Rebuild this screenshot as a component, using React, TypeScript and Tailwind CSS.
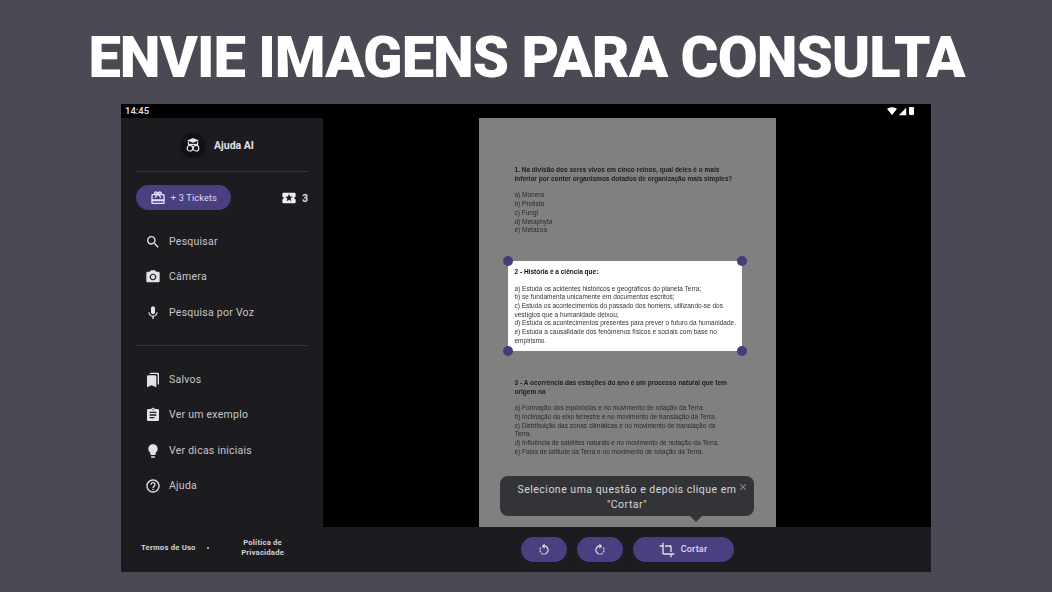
import React from "react";
import {
  MdAssignment,
  MdBookmarks,
  MdClose,
  MdCrop,
  MdHelpOutline,
  MdLightbulb,
  MdLocalActivity,
  MdMic,
  MdOutlineRedeem,
  MdPhotoCamera,
  MdRotateLeft,
  MdRotateRight,
  MdSearch,
  MdSignalCellular4Bar,
  MdSignalWifi4Bar,
} from "react-icons/md";

const topMenu = [
  { label: "Pesquisar", icon: MdSearch },
  { label: "Câmera", icon: MdPhotoCamera },
  { label: "Pesquisa por Voz", icon: MdMic },
];

const bottomMenu = [
  { label: "Salvos", icon: MdBookmarks },
  { label: "Ver um exemplo", icon: MdAssignment },
  { label: "Ver dicas iniciais", icon: MdLightbulb },
  { label: "Ajuda", icon: MdHelpOutline },
];

const MenuItem = ({ label, icon: Icon }: { label: string; icon: React.ElementType }) => (
  <div className="flex h-[35.5px] items-center pl-[24px] pt-[1px]">
    <Icon className="h-[16px] w-[16px] text-[#e6e1e5]" />
    <span className="ml-[8px] text-[10.5px] tracking-[0.25px] text-[#c9c5ca]">{label}</span>
  </div>
);

const Logo = () => (
  <div className="flex h-[22px] w-[22px] items-center justify-center rounded-full bg-[#111013] shadow-[0_1px_4px_rgba(0,0,0,0.8)]">
    <svg width="16" height="16" viewBox="0 0 16 16" fill="none" stroke="#e6e1e5" strokeWidth="1.2">
      <path d="M8 1 14 3.4 8 5.8 2 3.4Z" fill="#e6e1e5" stroke="none" />
      <path d="M3.4 4.5V7.6M12.6 4.5V7.6" />
      <path d="M3 7.4h10" />
      <circle cx="5" cy="11.2" r="2.8" />
      <circle cx="11" cy="11.2" r="2.8" />
    </svg>
  </div>
);

const Sidebar = () => (
  <aside className="flex w-[202px] shrink-0 flex-col bg-[#1c1b1f]">
    <div className="flex h-[53px] shrink-0 items-center pl-[61px] pt-[1px]">
      <Logo />
      <span className="ml-[10px] pt-[1px] text-[10.5px] font-bold text-[#e6e1e5]">Ajuda AI</span>
    </div>
    <div className="mx-[15px] h-px shrink-0 bg-[#38373b]" />
    <div className="mt-[13px] flex h-[25px] shrink-0 items-center justify-between pl-[15px] pr-[15px]">
      <div className="flex h-[25px] w-[95px] items-center justify-center rounded-full bg-[#4a4080] pt-[1px]">
        <MdOutlineRedeem className="h-[16px] w-[16px] text-[#e8e0ff]" />
        <span className="ml-[5px] pt-[1px] text-[9px] tracking-[0.25px] text-[#e0daf5]">+ 3 Tickets</span>
      </div>
      <div className="flex items-center pt-[1px]">
        <MdLocalActivity className="h-[16px] w-[16px] text-[#f0eef2]" />
        <span className="ml-[5px] text-[10px] font-bold text-[#e6e1e5]">3</span>
      </div>
    </div>
    <div className="mt-[13.5px] flex shrink-0 flex-col">
      {topMenu.map((item) => (
        <MenuItem key={item.label} {...item} />
      ))}
    </div>
    <div className="mx-[15px] mt-[14.5px] h-px shrink-0 bg-[#38373b]" />
    <div className="mt-[16px] flex shrink-0 flex-col">
      {bottomMenu.map((item) => (
        <MenuItem key={item.label} {...item} />
      ))}
    </div>
    <div className="mt-auto flex h-[46px] shrink-0 items-center pb-[2px] pl-[20px] text-[7.7px] font-bold tracking-[0.2px] text-[#d5d2d7]">
      <span>Termos de Uso</span>
      <span className="ml-[11px] h-[2px] w-[2px] rounded-full bg-[#d5d2d7]" />
      <span className="ml-[30px] w-[48px] text-center leading-[10px]">Política de Privacidade</span>
    </div>
  </aside>
);

const Handle = ({ className }: { className: string }) => (
  <span className={`absolute h-[10px] w-[10px] rounded-full bg-[#453c7c] ${className}`} />
);

const Line = ({ children, bold }: { children: React.ReactNode; bold?: boolean }) => (
  <p className={bold ? "font-bold" : ""}>{children}</p>
);

const Paper = () => (
  <div className="relative h-[409px] w-[297px] overflow-hidden bg-[#808080] font-['Liberation_Sans',sans-serif] text-[6.5px] leading-[8.7px] text-[#1d1d1d] blur-[0.3px]">
    <div className="pl-[36px] pt-[48px]">
      <Line bold>1. Na divisão dos seres vivos em cinco reinos, qual deles é o mais</Line>
      <Line bold>inferior por conter organismos dotados de organização mais simples?</Line>
      <div className="mt-[8px] text-[#2a2a2a]">
        <Line>a) Monera</Line>
        <Line>b) Protista</Line>
        <Line>c) Fungi</Line>
        <Line>d) Metaphyta</Line>
        <Line>e) Metazoa</Line>
      </div>
    </div>
    <div className="ml-[29px] mt-[26px] h-[90px] w-[234px] bg-white pl-[7px] pt-[7px] text-[#333]">
      <Line bold><span className="text-[#111]">2 - História é a ciência que:</span></Line>
      <div className="mt-[8px]">
        <Line>a) Estuda os acidentes históricos e geográficos do planeta Terra;</Line>
        <Line>b) se fundamenta unicamente em documentos escritos;</Line>
        <Line>c) Estuda os acontecimentos do passado dos homens, utilizando-se dos</Line>
        <Line>vestígios que a humanidade deixou;</Line>
        <Line>d) Estuda os acontecimentos presentes para prever o futuro da humanidade.</Line>
        <Line>e) Estuda a causalidade dos fenômenos físicos e sociais com base no</Line>
        <Line>empirismo.</Line>
      </div>
    </div>
    <div className="pl-[36px] pt-[28px]">
      <Line bold>3 - A ocorrência das estações do ano é um processo natural que tem</Line>
      <Line bold>origem na</Line>
      <div className="mt-[8px] text-[#2a2a2a]">
        <Line>a) Formação dos equinócios e no movimento de rotação da Terra.</Line>
        <Line>b) Inclinação do eixo terrestre e no movimento de translação da Terra.</Line>
        <Line>c) Distribuição das zonas climáticas e no movimento de translação da</Line>
        <Line>Terra.</Line>
        <Line>d) Influência de satélites naturais e no movimento de nutação da Terra.</Line>
        <Line>e) Faixa de latitude da Terra e no movimento de rotação da Terra.</Line>
      </div>
    </div>
    <Handle className="left-[24px] top-[138px]" />
    <Handle className="left-[258px] top-[138px]" />
    <Handle className="left-[24px] top-[228px]" />
    <Handle className="left-[258px] top-[228px]" />
  </div>
);

const Tooltip = () => (
  <div className="absolute left-[177px] top-[358px] h-[40px] w-[254px] rounded-[8px] bg-[#333438] pt-[6px] text-center text-[10.5px] leading-[15px] tracking-[0.5px] text-[#d8d6da]">
    <p>Selecione uma questão e depois clique em</p>
    <p>"Cortar"</p>
    <MdClose className="absolute right-[6px] top-[6px] h-[10px] w-[10px] text-[#9b9a9e]" />
    <span className="absolute left-[190px] top-[40px] h-0 w-0 border-x-[6px] border-t-[6px] border-x-transparent border-t-[#333438]" />
  </div>
);

const ActionButton = ({ className, children }: { className: string; children: React.ReactNode }) => (
  <div className={`flex h-[25px] items-center justify-center rounded-full bg-[#4a4080] ${className}`}>{children}</div>
);

const Viewer = () => (
  <div className="flex min-w-0 flex-1 flex-col">
    <div className="relative flex h-[409px] shrink-0 justify-center bg-black">
      <Paper />
      <Tooltip />
    </div>
    <div className="flex flex-1 items-center justify-center gap-[10px] bg-[#1c1b1f]">
      <ActionButton className="w-[46px]">
        <MdRotateLeft className="h-[14px] w-[14px] text-[#e6e1e5]" />
      </ActionButton>
      <ActionButton className="w-[46px]">
        <MdRotateRight className="h-[14px] w-[14px] text-[#e6e1e5]" />
      </ActionButton>
      <ActionButton className="w-[101px]">
        <MdCrop className="h-[16px] w-[16px] text-[#e6e1e5]" />
        <span className="ml-[6px] text-[9px] font-medium tracking-[0.2px] text-[#e0daf5]">Cortar</span>
      </ActionButton>
    </div>
  </div>
);

export default function App() {
  return (
    <div className="flex h-[592px] w-[1052px] flex-col items-center overflow-hidden bg-[#4a4a55] font-['Roboto',sans-serif]">
      <h1 className="flex h-[104px] shrink-0 items-center pl-[1px] pt-[10px] text-[58px] font-black leading-none tracking-[-1px] text-white">
        ENVIE IMAGENS PARA CONSULTA
      </h1>
      <div className="flex h-[468px] w-[810px] shrink-0 flex-col bg-black">
        <div className="flex h-[14px] shrink-0 items-center justify-between pl-[4px] pr-[17px] text-[9.5px] font-medium text-[#e6e1e5]">
          <span>14:45</span>
          <div className="flex items-center text-white">
            <MdSignalWifi4Bar className="h-[10px] w-[10px]" />
            <MdSignalCellular4Bar className="ml-[1px] h-[9px] w-[9px]" />
            <span className="ml-[2px] h-[8px] w-[5px] rounded-[1px] bg-white" />
          </div>
        </div>
        <div className="flex min-h-0 flex-1">
          <Sidebar />
          <Viewer />
        </div>
      </div>
    </div>
  );
}
